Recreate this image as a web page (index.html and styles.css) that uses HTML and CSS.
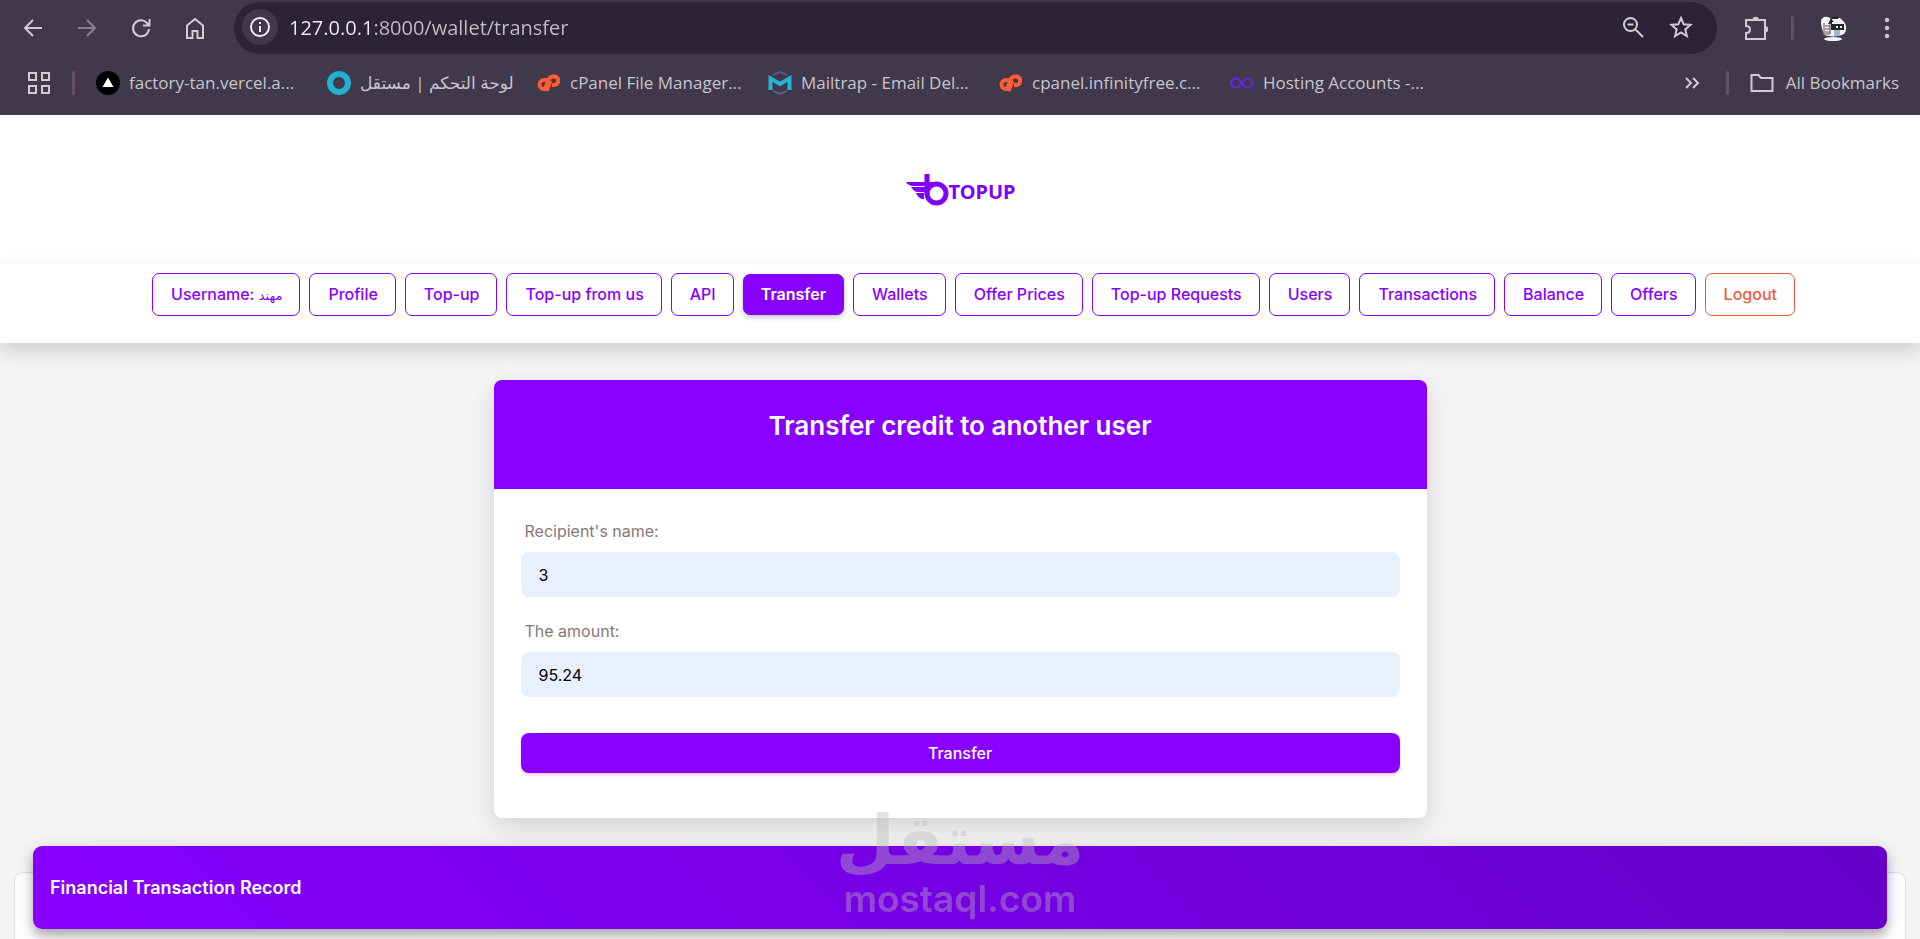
FILE: index.html
```html
<!DOCTYPE html>
<html lang="en">
<head>
  <meta charset="UTF-8">
  <title>Transfer</title>
  <link rel="stylesheet" href="styles.css">
</head>
<body>

  <!-- Browser bar -->
  <div class="browser">
    <div class="toolbar">
      <button class="tool" aria-label="Back"><svg width="24" height="24" viewBox="0 0 24 24"><path d="M21 12H4M12 4l-8 8 8 8"/></svg></button>
      <button class="tool dim" aria-label="Forward"><svg width="24" height="24" viewBox="0 0 24 24"><path d="M3 12h17M12 4l8 8-8 8"/></svg></button>
      <button class="tool" aria-label="Reload"><svg width="24" height="24" viewBox="0 0 24 24"><path d="M20 13a8 8 0 1 1-2-6l2 2M20.500 3v6.500h-6.500"/></svg></button>
      <button class="tool" aria-label="Home"><svg width="24" height="24" viewBox="0 0 24 24"><path d="M4 22V9.500L12 3l8 6.500V22h-5.500v-7h-5v7z"/></svg></button>

      <div class="address">
        <button class="site-info" aria-label="Site information"><svg width="22" height="22" viewBox="0 0 22 22"><circle cx="11" cy="11" r="9"/><path d="M11 10v6M11 6v2"/></svg></button>
        <input class="url" type="text" aria-label="Address" value="127.0.0.1:8000/wallet/transfer">
        <button class="tool" aria-label="Zoom"><svg width="24" height="24" viewBox="0 0 24 24"><circle cx="9.500" cy="9.500" r="6.500"/><path d="M14.500 14.500L22 22M6.500 9.500h6"/></svg></button>
        <button class="tool" aria-label="Bookmark this page"><svg width="24" height="24" viewBox="0 0 24 24"><path d="M12 3l2.700 6.300 6.800.6-5.200 4.500 1.600 6.700-5.900-3.600-5.900 3.600 1.600-6.700-5.200-4.500 6.800-.6z"/></svg></button>
      </div>

      <button class="tool" aria-label="Extensions"><svg width="28" height="28" viewBox="0 0 28 28"><path d="M3 6h19v19H3v-6c2.500 0 4-1.500 4-3.500S5.500 12 3 12z"/><path class="fill" d="M9.500 6a3.200 3.200 0 0 1 6.400 0zM22 12a3.200 3.200 0 0 1 0 6.400z"/></svg></button>
      <span class="divider"></span>
      <button class="tool avatar" aria-label="Profile">
        <svg width="28" height="28" viewBox="0 0 28 28">
          <path class="face" d="M2 8c0-5 6-7 10-3l9-1 3 3c4 3 4 10 1 13-5 3-14 3-20 1-1-4-3-8-3-13z"/>
          <path class="ink" d="M12 4l-3 6h7zM12 10h13v6H12zM13 3h6v2h-6z"/>
          <path class="face" d="M13 8h7v2h-7zM17 12h2v2h-2zM21 12h2v2h-2z"/>
          <path class="ink-line" d="M6 12h5M6 15h5M6 18h5M5 9v11h6V9"/>
          <path class="blue" d="M15 16h6v6h-6z"/>
          <ellipse class="face" cx="14" cy="25" rx="9" ry="2"/>
        </svg>
      </button>
      <button class="tool" aria-label="Menu"><svg width="24" height="24" viewBox="0 0 24 24"><g class="fill"><circle cx="12" cy="4" r="2.200"/><circle cx="12" cy="12" r="2.200"/><circle cx="12" cy="20" r="2.200"/></g></svg></button>
    </div>

    <div class="bookmarks">
      <button class="tool" aria-label="Apps"><svg width="24" height="24" viewBox="0 0 24 24"><path d="M2 2h7v7H2zM15 2h7v7h-7zM2 15h7v7H2zM15 15h7v7h-7z"/></svg></button>
      <span class="divider"></span>
      <div class="bookmark-list">
        <a class="bookmark" href="#"><svg width="24" height="24" viewBox="0 0 24 24"><circle cx="12" cy="12" r="12" fill="#000"/><path d="M12 6.500l5.500 9.500h-11z" fill="#fff"/></svg>factory-tan.vercel.a...</a>
        <a class="bookmark short" href="#"><svg width="24" height="24" viewBox="0 0 24 24"><circle cx="12" cy="12" r="9" fill="none" stroke="#1fb0d2" stroke-width="6"/></svg><span dir="rtl" lang="ar">لوحة التحكم | مستقل</span></a>
        <a class="bookmark" href="#"><svg width="24" height="24" viewBox="0 0 24 24"><g fill="none" stroke="#ff5b35" stroke-width="4"><path d="M10 9H7a4.500 4.500 0 0 0 0 9h1l4-10c1-2 2-2.500 4-2.500h1.500a4.300 4.300 0 0 1 0 8.500H15M9.500 20l4-10"/></g></svg>cPanel File Manager...</a>
        <a class="bookmark" href="#"><svg width="24" height="24" viewBox="0 0 24 24"><path d="M5 4l7-3 7 3M5 20l7 3 7-3" fill="none" stroke="#5b5a82" stroke-width="2"/><path d="M2.500 19V7.500L12 13l9.500-5.500V19" fill="none" stroke="#22b5d8" stroke-width="4"/></svg>Mailtrap - Email Del...</a>
        <a class="bookmark" href="#"><svg width="24" height="24" viewBox="0 0 24 24"><g fill="none" stroke="#ff5b35" stroke-width="4"><path d="M10 9H7a4.500 4.500 0 0 0 0 9h1l4-10c1-2 2-2.500 4-2.500h1.500a4.300 4.300 0 0 1 0 8.500H15M9.500 20l4-10"/></g></svg>cpanel.infinityfree.c...</a>
        <a class="bookmark" href="#"><svg width="24" height="24" viewBox="0 0 24 24"><path d="M12 12C9 8 7.500 7.500 6 7.500a4.500 4.500 0 0 0 0 9c1.500 0 3-.5 6-4.500s4.500-4.500 6-4.500a4.500 4.500 0 0 1 0 9c-1.500 0-3-.5-6-4.500z" fill="none" stroke="#5c2bd0" stroke-width="2.500"/></svg>Hosting Accounts -...</a>
      </div>
      <button class="tool" aria-label="More bookmarks"><svg width="24" height="24" viewBox="0 0 24 24"><path d="M5 7l5 5-5 5M12 7l5 5-5 5"/></svg></button>
      <span class="divider"></span>
      <a class="bookmark all" href="#"><svg width="24" height="24" viewBox="0 0 24 24"><path class="outline" d="M1.500 20V4h7l2.500 3h11.500v13z"/></svg>All Bookmarks</a>
    </div>
  </div>

  <header class="brand">
    <a class="logo" href="#">
      <svg width="44" height="34" viewBox="0 0 44 34">
        <path d="M1 9h27v4H8C5 13 2 11 1 9zM6 14h14v5h-7c-3 0-5-2-7-5zM11 20h8v6c-4 0-6-2-8-6z" fill="#8000ff"/>
        <path d="M22 1v20" stroke="#8000ff" stroke-width="5" fill="none"/>
        <circle cx="31.500" cy="20.500" r="9.500" stroke="#8000ff" stroke-width="5" fill="none"/>
      </svg>
      <span>TOPUP</span>
    </a>
  </header>

  <nav class="menu">
    <a href="#">Username: <span class="user" lang="ar">مهند</span></a>
    <a href="#">Profile</a>
    <a href="#">Top-up</a>
    <a href="#">Top-up from us</a>
    <a href="#">API</a>
    <a class="active" href="#">Transfer</a>
    <a href="#">Wallets</a>
    <a href="#">Offer Prices</a>
    <a href="#">Top-up Requests</a>
    <a href="#">Users</a>
    <a href="#">Transactions</a>
    <a href="#">Balance</a>
    <a href="#">Offers</a>
    <a class="logout" href="#">Logout</a>
  </nav>

  <main>
    <div class="card">
      <div class="card-header">
        <h1>Transfer credit to another user</h1>
      </div>
      <form class="card-body">
        <label for="recipient">Recipient's name:</label>
        <input type="text" id="recipient" value="3">

        <label for="amount">The amount:</label>
        <input type="text" id="amount" value="95.24">

        <button type="button">Transfer</button>
      </form>
    </div>

    <section class="record">
      <h2>Financial Transaction Record</h2>
    </section>
  </main>

  <div class="watermark">
    <span class="mark-ar" lang="ar" dir="rtl">مستقل</span>
    <span class="mark-en">mostaql.com</span>
  </div>

</body>
</html>
```
FILE: styles.css
```css
* {
  box-sizing: border-box;
}

body {
  display: flex;
  flex-direction: column;
  margin: 0;
  height: 100vh;
  overflow: hidden;
  font-family: Inter, "DejaVu Sans", sans-serif;
  font-size: 16px;
  background: #f4f4f4;
}

a {
  text-decoration: none;
}

/* browser bar */
.browser {
  flex: none;
  height: 115px;
  background: #40384b;
  border-bottom: 1px solid #4d4257;
  color: #c9c5cd;
  font-family: "Open Sans", "DejaVu Sans", sans-serif;
}

.toolbar {
  display: flex;
  align-items: center;
  height: 56px;
  padding: 0 13px;
  gap: 14px;
}

.toolbar .divider {
  margin-right: 5px;
}

.tool {
  display: flex;
  align-items: center;
  justify-content: center;
  flex: none;
  width: 40px;
  height: 40px;
  padding: 0;
  background: none;
  border: none;
}

.tool svg,
.site-info svg,
.outline {
  fill: none;
  stroke: #cfccd3;
  stroke-width: 2;
}

.tool .fill {
  fill: #cfccd3;
  stroke: none;
}

.dim svg {
  stroke: #8a7f8b;
}

.avatar svg {
  stroke: none;
}

.avatar .face {
  fill: #f4f4f4;
}

.avatar .ink {
  fill: #26242b;
}

.avatar .ink-line {
  stroke: #55535c;
  stroke-width: 1;
}

.avatar .blue {
  fill: #9db9c9;
}

.address {
  display: flex;
  align-items: center;
  flex: 1;
  height: 52px;
  margin: 0 6px 0 5px;
  padding: 0 16px 2px 8px;
  gap: 8px;
  border-radius: 26px;
  background: #2b2436;
}

.site-info {
  display: flex;
  align-items: center;
  justify-content: center;
  width: 36px;
  height: 36px;
  padding: 0;
  border: none;
  border-radius: 50%;
  background: #40384b;
}

.site-info svg {
  stroke: #f0edf2;
}

.url {
  flex: 1;
  padding: 0 3px;
  border: none;
  font-family: inherit;
  font-size: 20px;
  color: transparent;
  /* host is brighter than the path */
  background: linear-gradient(90deg, #f3f1f5 84px, #c2bec8 84px);
  -webkit-background-clip: text;
  background-clip: text;
}

.divider {
  flex: none;
  width: 3px;
  height: 24px;
  border-radius: 2px;
  background: #66505f;
}

.bookmarks {
  display: flex;
  align-items: center;
  height: 54px;
  padding: 0 21px 0 19px;
}

.bookmarks .divider {
  margin: 0 21px 0 13px;
}

.bookmark-list {
  display: flex;
  flex: 1;
}

.bookmark {
  display: flex;
  align-items: center;
  flex: none;
  width: 231px;
  gap: 9px;
  color: #c9c5cd;
  font-size: 17px;
  line-height: 24px;
  white-space: nowrap;
}

.bookmark svg {
  flex: none;
}

.bookmark.short {
  width: 210px;
}

.bookmark.all {
  width: auto;
  gap: 12px;
}

/* page header */
.brand {
  display: flex;
  flex: none;
  justify-content: center;
  padding: 56px 0;
  background: #fff;
}

.logo {
  display: flex;
  align-items: center;
  color: #8000ff;
  font-family: "Noto Sans", sans-serif;
  font-size: 20px;
  font-weight: bold;
  line-height: 33px;
}

.logo span {
  padding-top: 4px;
}

.menu {
  display: flex;
  flex: none;
  justify-content: center;
  gap: 9px;
  padding: 9px 0 27px 27px;
  background: #fff;
  box-shadow: 0 8px 18px rgba(0, 0, 0, 0.16);
}

.menu a {
  padding: 10px 17px 10px 18px;
  border: 1px solid #8800ff;
  border-radius: 7px;
  color: #8800ff;
  font-weight: 500;
  line-height: 20px;
  white-space: nowrap;
}

.menu .user {
  font-size: 13px;
  font-weight: normal;
}

.menu .active {
  margin: 1px 0;
  padding: 9px 17px;
  background: #8800ff;
  color: #fff;
  font-weight: 600;
  box-shadow: 0 2px 5px rgba(0, 0, 0, 0.25);
}

.menu .logout {
  border-color: #f05a3c;
  color: #f05a3c;
}

/* transfer form */
.card {
  width: 933px;
  margin: 37px auto 0;
  border-radius: 8px;
  background: #fff;
  box-shadow: 0 8px 24px rgba(0, 0, 0, 0.14);
}

.card-header {
  padding: 28px 20px 45px;
  border-radius: 8px 8px 0 0;
  background: #8800ff;
  color: #fff;
  text-align: center;
}

h1 {
  margin: 0;
  font-size: 26px;
  font-weight: 600;
  line-height: 36px;
}

.card-body {
  display: flex;
  flex-direction: column;
  padding: 30px 27px 45px;
}

label {
  margin: 0 4px 9px;
  color: #857a7a;
  line-height: 24px;
}

.card-body input {
  height: 45px;
  margin-bottom: 22px;
  padding: 0 18px;
  border: none;
  border-radius: 8px;
  background: #e8f0fe;
  color: #000;
  font-family: inherit;
  font-size: 16px;
}

.card-body button {
  height: 40px;
  margin-top: 14px;
  border: none;
  border-radius: 8px;
  background: #8800ff;
  color: #fff;
  font-family: inherit;
  font-size: 16px;
  font-weight: 500;
  box-shadow: 0 2px 3px rgba(233, 30, 99, 0.25);
}

/* record panel, its title bar hangs over the top edge */
main {
  flex: 1;
  min-height: 0;
  display: flex;
  flex-direction: column;
}

.record {
  flex: 1;
  margin: 54px 14px 0;
  padding: 0 18px;
  border: 1px solid #dedede;
  border-bottom: none;
  border-radius: 9px 9px 0 0;
  background: #fff;
}

.record h2 {
  margin: -27px 0 0;
  padding: 28px 17px;
  border-radius: 9px;
  background: linear-gradient(45deg, #8800ff, #6400c8);
  color: #fff;
  font-size: 18px;
  font-weight: 600;
  line-height: 27px;
  box-shadow: 0 4px 20px rgba(0, 0, 0, 0.14), 0 7px 10px rgba(0, 0, 0, 0.24);
}

.watermark {
  position: absolute;
  left: 0;
  right: 0;
  bottom: 18px;
  display: flex;
  flex-direction: column;
  align-items: center;
  color: #bababa;
  opacity: 0.39;
  pointer-events: none;
}

.mark-ar {
  font-family: "DejaVu Sans", sans-serif;
  font-size: 68px;
  font-weight: bold;
  line-height: 72px;
}

.mark-en {
  font-size: 37px;
  font-weight: 600;
  line-height: 44px;
}
```
